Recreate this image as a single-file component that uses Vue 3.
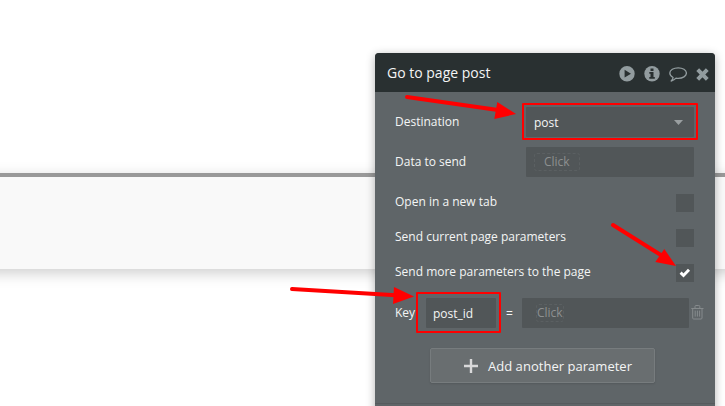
<script setup>
const toggles = [
  { label: 'Open in a new tab', checked: false },
  { label: 'Send current page parameters', checked: false },
  { label: 'Send more parameters to the page', checked: true },
]
</script>

<template>
  <main class="canvas">
    <div class="band"></div>

    <section class="panel">
      <header class="head">
        <h1>Go to page post</h1>
        <div class="tools">
          <svg width="16" height="16" viewBox="0 0 16 16">
            <path fill="#929c9f" fill-rule="evenodd" d="M8 0a7.700 7.700 0 1 0 0 15.400A7.700 7.700 0 0 0 8 0ZM5.600 3.800v7.800L12 7.700Z" />
          </svg>
          <svg width="16" height="16" viewBox="0 0 16 16">
            <circle cx="8" cy="7.700" r="7.700" fill="#929c9f" />
            <path fill="#293031" d="M6.500 2.500h3v2.400h-3ZM5.300 6.100h4.200v5h1.300v1.700H5.300v-1.700h1.200V7.800H5.300Z" />
          </svg>
          <svg class="bubble" width="18" height="16" viewBox="0 0 18 16">
            <path fill="none" stroke="#929c9f" stroke-width="1.300" stroke-linejoin="round" d="M9.200 1.800C4.700 1.800.8 4 .8 7.100c0 2 1.400 3.500 3.300 4.400-.2 1.300-.9 2.400-1.900 3.500 2-.5 3.600-1.400 4.800-2.800.7.1 1.500.2 2.200.2 4.500 0 8.200-2.300 8.200-5.300S13.700 1.800 9.200 1.800Z" />
          </svg>
          <svg class="close" width="13" height="13" viewBox="0 0 13 13">
            <path stroke="#929c9f" stroke-width="4" d="M1.700 1.700l9.600 9.600M11.300 1.700l-9.600 9.600" />
          </svg>
        </div>
      </header>

      <div class="body">
        <div class="row field-row">
          <span class="label">Destination</span>
          <div class="field select">
            <span>post</span>
            <svg width="9" height="5" viewBox="0 0 9 5"><path fill="#9a9fa1" d="M0 0h9L4.500 5Z" /></svg>
          </div>
        </div>
        <div class="row field-row">
          <span class="label">Data to send</span>
          <div class="field"><span class="slot">Click</span></div>
        </div>

        <div class="toggles">
          <div v-for="t in toggles" :key="t.label" class="row toggle">
            <span class="label">{{ t.label }}</span>
            <span class="box">
              <svg v-if="t.checked" width="12" height="10" viewBox="0 0 12 10">
                <path fill="none" stroke="#fff" stroke-width="2.900" d="M1.600 4.600l2.900 2.900 5.500-5.800" />
              </svg>
            </span>
          </div>
        </div>

        <div class="param">
          <span class="label">Key</span>
          <div class="field key">post_id</div>
          <span class="eq">=</span>
          <div class="field value"><span class="slot tight">Click</span></div>
          <svg class="trash" width="13" height="15" viewBox="0 0 13 15">
            <path fill="none" stroke="#868b8d" d="M.3 3.500h12.200M4 3.300V1.500q0-1 1-1h2.800q1 0 1 1v1.800M1.700 3.700v9.300q0 1 1 1H10q1 0 1-1V3.700M4.200 5.600v6M6.400 5.600v6M8.600 5.600v6" />
          </svg>
        </div>

        <button class="add" type="button">
          <svg width="14" height="14" viewBox="0 0 14 14"><path stroke="#d9d9da" stroke-width="2.400" d="M7 0v14M0 7h14" /></svg>
          <span>Add another parameter</span>
        </button>
        <div class="divider"></div>
      </div>
    </section>

    <div class="mark mark-destination"></div>
    <div class="mark mark-key"></div>
    <svg class="arrows" width="725" height="406" viewBox="0 0 725 406">
      <g fill="none" stroke="#f00" stroke-width="4" stroke-linecap="round">
        <path d="M407 97L498 110" />
        <path d="M613 225L664 257" />
        <path d="M292 289L396 295.300" />
      </g>
      <g fill="#f00">
        <path d="M516 114L497.300 102 494.300 119Z" />
        <path d="M676 266L664.300 249 655.300 262Z" />
        <path d="M414 296.500L394 287 393 304Z" />
      </g>
    </svg>
  </main>
</template>

<style>
body { margin: 0; background: #fff; }
</style>

<style scoped>
* { box-sizing: border-box; }
.canvas {
  position: relative;
  width: 725px;
  height: 406px;
  overflow: hidden;
  padding: 53px 10px 0 375px;
  background: #fff;
  font-family: "Open Sans", "Noto Sans", sans-serif;
  font-size: 12px;
  color: #f4f5f5;
}
.band {
  position: absolute;
  left: -20px;
  right: -20px;
  top: 173px;
  height: 96px;
  border-top: 4px solid #999;
  background: #f9f9f9;
  box-shadow: 0 4px 14px rgba(0, 0, 0, .2);
}
.panel {
  position: relative;
  width: 340px;
  height: 380px;
  border-radius: 4px 4px 0 0;
  overflow: hidden;
  background: #5f6568;
  box-shadow: 0 2px 10px rgba(0, 0, 0, .3);
}
.head {
  display: flex;
  align-items: center;
  justify-content: space-between;
  height: 39px;
  padding: 0 6px 0 12px;
  background: #293031;
}
h1 { margin: 0; font-size: 14px; font-weight: 400; line-height: 20px; }
.tools { display: flex; align-items: center; gap: 9px; padding-top: 3px; }
.body { padding: 15px 0 0 20px; }
.row { display: flex; justify-content: space-between; width: 299px; }
.label { line-height: 18px; white-space: nowrap; }
.field-row { height: 30px; margin-bottom: 10px; align-items: center; }
.field {
  display: flex;
  align-items: center;
  width: 168px;
  height: 30px;
  padding: 0 8px;
  border-radius: 1px;
  background: #515658;
}
.select { justify-content: space-between; padding: 1px 11px 0 8px; }
.slot {
  height: 18px;
  padding: 0 9px;
  border: 1px dashed #5b6062;
  border-radius: 3px;
  line-height: 15px;
  color: #8d9090;
}
.toggles { display: flex; flex-direction: column; gap: 17px; padding-top: 7px; }
.toggle { height: 18px; }
.toggle .label { line-height: 16px; }
.box {
  display: flex;
  align-items: center;
  justify-content: center;
  width: 18px;
  height: 18px;
  background: #515658;
}
.param { display: flex; align-items: center; height: 30px; margin-top: 16px; }
.param .label { width: 31px; }
.key { width: 70px; padding: 1px 7px 0; }
.eq { width: 26px; padding-left: 10px; }
.value { width: 167px; padding-left: 14px; }
.tight { padding: 0; }
.trash { margin: 0 0 2px 1.5px; }
.add {
  display: flex;
  align-items: center;
  gap: 10px;
  width: 225px;
  height: 35px;
  margin: 20px 0 0 35px;
  padding: 0 0 0 33px;
  border: 1px solid #777c7e;
  border-radius: 2px;
  background: #696e70;
  color: #f4f5f5;
  font: 13px "Open Sans", "Noto Sans", sans-serif;
  letter-spacing: .03px;
  box-shadow: 0 1px 2px rgba(0, 0, 0, .12);
}
.divider { height: 1px; margin: 20px 0 0 -20px; background: #565b5e; }
.mark { position: absolute; border: 2px solid #f00; border-radius: 1px; }
.mark-destination { left: 522px; top: 103px; width: 176px; height: 37px; }
.mark-key { left: 416px; top: 292px; width: 85px; height: 41px; }
.arrows { position: absolute; left: 0; top: 0; }
</style>
